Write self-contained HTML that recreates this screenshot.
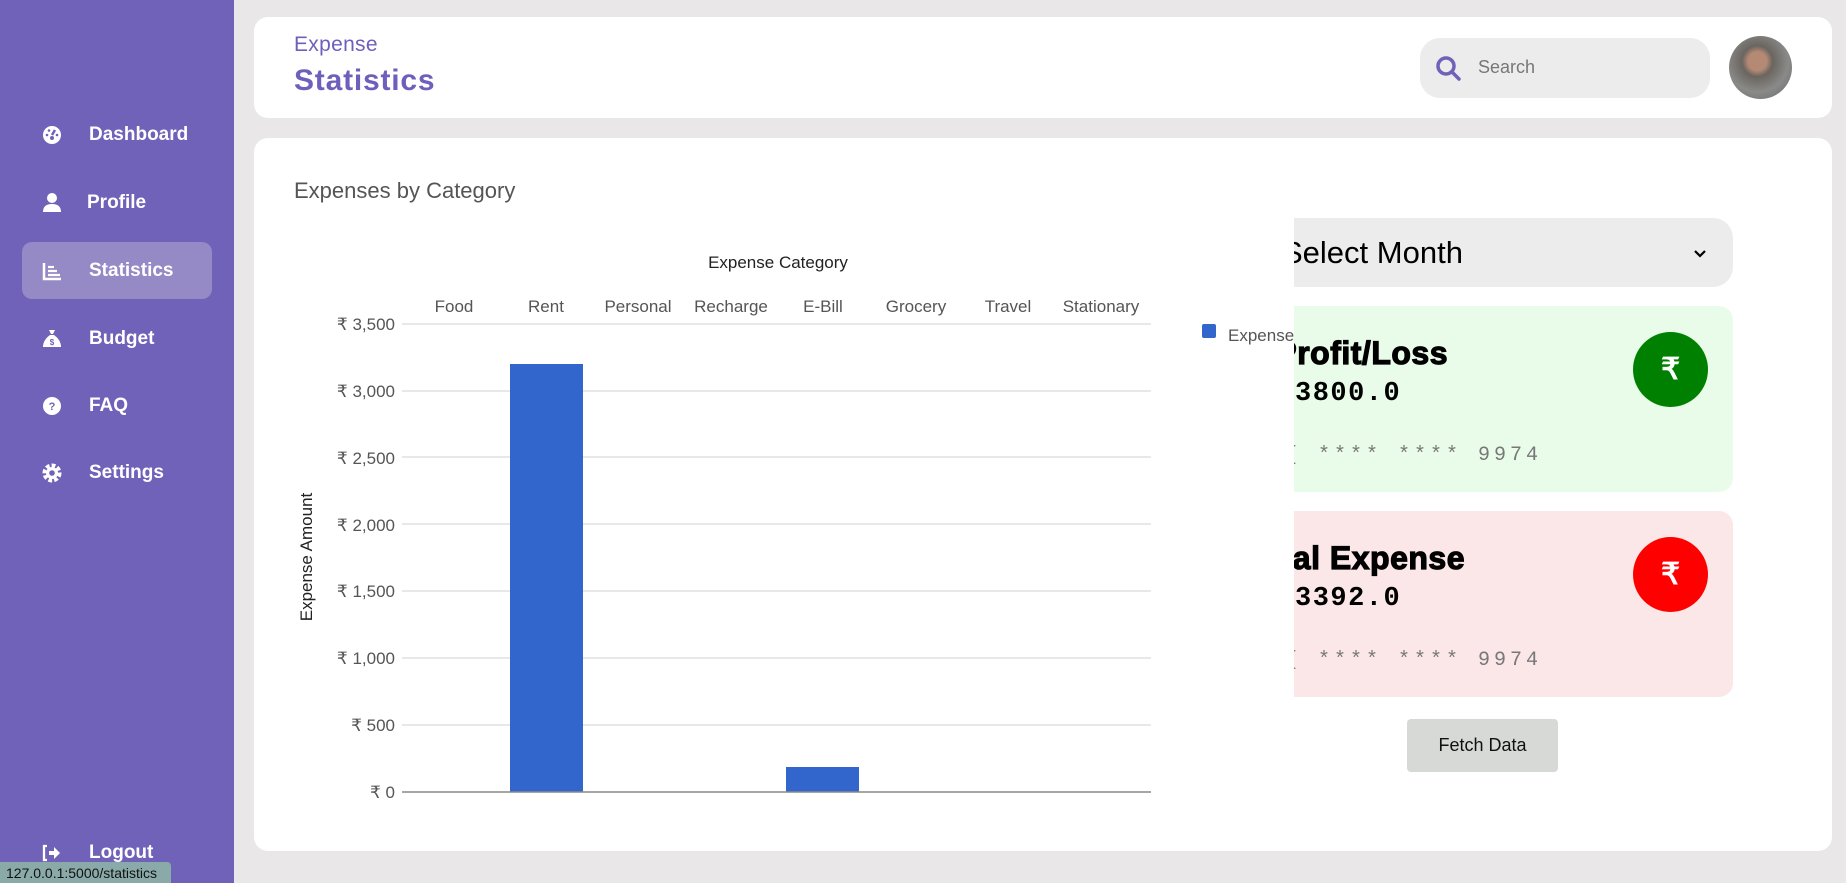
<!DOCTYPE html>
<html><head><meta charset="utf-8"><style>
*{margin:0;padding:0;box-sizing:border-box}
body{width:1846px;height:883px;overflow:hidden;background:#e9e7e8;font-family:"Liberation Sans",sans-serif;position:relative}
.side{position:absolute;left:0;top:0;width:234px;height:883px;background:#7062b8}
.item{position:absolute;left:0;width:234px;height:30px;color:#fff;font-weight:bold;font-size:19px}
.item .ic{position:absolute;left:41px;top:4px;width:22px;height:22px}
.item .tx{position:absolute;left:89px;top:4px}
.active{position:absolute;left:22px;top:242px;width:190px;height:57px;background:#9589c6;border-radius:10px}
.card{position:absolute;background:#fff;border-radius:14px}
.mono{font-family:"Liberation Mono",monospace}
.hd{position:absolute;top:29px;font-size:32px;font-weight:bold;text-align:right;width:400px;white-space:nowrap;letter-spacing:0.5px;color:#000;-webkit-text-stroke:1.2px #000}
</style></head><body>
<div class="side">
<div class="active"></div>
<div class="item" style="top:120px"><svg class="ic" viewBox="0 0 22 22"><circle cx="11" cy="11" r="9" fill="#fff"/><path d="M11 11 L14 6" stroke="#7062b8" stroke-width="2.5"/><circle cx="6" cy="11" r="1.3" fill="#7062b8"/><circle cx="8" cy="6.5" r="1.3" fill="#7062b8"/><circle cx="16" cy="11" r="1.3" fill="#7062b8"/><circle cx="11" cy="14" r="2" fill="#7062b8"/></svg><span class="tx">Dashboard</span></div>
<div class="item" style="top:188px"><svg class="ic" viewBox="0 0 22 22"><circle cx="11" cy="6" r="5" fill="#fff"/><path d="M2 20 Q2 12 11 12 Q20 12 20 20Z" fill="#fff"/></svg><span class="tx" style="left:87px">Profile</span></div>
<div class="item" style="top:256px"><svg class="ic" viewBox="0 0 22 22"><path d="M3 3V19H20" stroke="#fff" stroke-width="2.5" fill="none"/><path d="M7 7H13M7 11H16M7 15H19" stroke="#fff" stroke-width="2.3"/></svg><span class="tx">Statistics</span></div>
<div class="item" style="top:324px"><svg class="ic" viewBox="0 0 22 22"><path d="M8 2H14L12 6H10Z" fill="#fff"/><path d="M9 7H13Q20 12 20 19H2Q2 12 9 7Z" fill="#fff"/><text x="11" y="17" font-size="8" fill="#7062b8" text-anchor="middle" font-family="Liberation Sans">$</text></svg><span class="tx">Budget</span></div>
<div class="item" style="top:391px"><svg class="ic" viewBox="0 0 22 22"><circle cx="11" cy="11" r="9" fill="#fff"/><text x="11" y="15" font-size="11" font-weight="bold" fill="#7062b8" text-anchor="middle" font-family="Liberation Sans">?</text></svg><span class="tx">FAQ</span></div>
<div class="item" style="top:458px"><svg class="ic" viewBox="0 0 22 22"><circle cx="11" cy="11" r="7" fill="none" stroke="#fff" stroke-width="5" stroke-dasharray="3.5 1.9"/><circle cx="11" cy="11" r="6" fill="#fff"/><circle cx="11" cy="11" r="2.8" fill="#7062b8"/></svg><span class="tx">Settings</span></div>
<div class="item" style="top:838px"><svg class="ic" viewBox="0 0 22 22"><path d="M6 4H3V18H6" stroke="#fff" stroke-width="2.3" fill="none"/><path d="M8 9H13V5L19 11L13 17V13H8Z" fill="#fff"/></svg><span class="tx">Logout</span></div>
</div>
<div style="position:absolute;left:0;top:862px;width:171px;height:21px;background:#8aaaa9;border-top-right-radius:4px;font-size:14px;color:#111;padding:3px 0 0 6px">127.0.0.1:5000/statistics</div>

<div class="card" style="left:254px;top:17px;width:1578px;height:101px">
<div style="position:absolute;left:40px;top:16px;color:#6f5fbd;font-size:21px;letter-spacing:0.3px">Expense</div>
<div style="position:absolute;left:40px;top:47px;color:#6f5fbd;font-size:30px;font-weight:bold;letter-spacing:0.8px">Statistics</div>
<div style="position:absolute;left:1166px;top:21px;width:290px;height:60px;background:#ececec;border-radius:20px">
<svg style="position:absolute;left:15px;top:17px" width="28" height="28" viewBox="0 0 28 28"><circle cx="11" cy="11" r="8" fill="none" stroke="#7062b8" stroke-width="3.5"/><path d="M17 17L24 24" stroke="#7062b8" stroke-width="3.5" stroke-linecap="round"/></svg>
<div style="position:absolute;left:58px;top:19px;font-size:18px;color:#777">Search</div></div>
<div style="position:absolute;left:1475px;top:19px;width:63px;height:63px;border-radius:50%;background:radial-gradient(circle at 45% 40%,#b58a74 0 18%,#6a6560 30%,#8a8a88 60%,#5f6a6a 100%)"></div>
</div>

<div class="card" style="left:254px;top:138px;width:1578px;height:713px"></div>
<div style="position:absolute;left:294px;top:178px;font-size:22px;color:#555">Expenses by Category</div>
<svg style="position:absolute;left:0;top:0" width="1300" height="883" font-family="Liberation Sans" font-size="17" fill="#555">
<text x="778" y="268" text-anchor="middle" fill="#222" font-size="17">Expense Category</text>
<g text-anchor="middle"><text x="454" y="312">Food</text><text x="546" y="312">Rent</text><text x="638" y="312">Personal</text><text x="731" y="312">Recharge</text><text x="823" y="312">E-Bill</text><text x="916" y="312">Grocery</text><text x="1008" y="312">Travel</text><text x="1101" y="312">Stationary</text></g>
<g stroke="#e0e0e0" stroke-width="1.5"><path d="M402 324H1151M402 391H1151M402 457H1151M402 524H1151M402 591H1151M402 658H1151M402 725H1151"/></g>
<g text-anchor="end"><text x="395" y="330">₹ 3,500</text><text x="395" y="397">₹ 3,000</text><text x="395" y="464">₹ 2,500</text><text x="395" y="531">₹ 2,000</text><text x="395" y="597">₹ 1,500</text><text x="395" y="664">₹ 1,000</text><text x="395" y="731">₹ 500</text><text x="395" y="798">₹ 0</text></g>
<rect x="510" y="364" width="73" height="428" fill="#3366cc"/>
<rect x="786" y="767" width="73" height="25" fill="#3366cc"/>
<path d="M402 792H1151" stroke="#888" stroke-width="1.5"/>
<text transform="translate(312,557) rotate(-90)" text-anchor="middle" fill="#222">Expense Amount</text>
<rect x="1202" y="324" width="14" height="14" rx="2" fill="#3366cc"/>
<text x="1228" y="341">Expense</text>
</svg>
<div style="position:absolute;left:1294px;top:210px;width:440px;height:500px;overflow:hidden">
<div style="position:absolute;left:-30px;top:8px;width:469px;height:69px;background:#ececec;border-radius:20px"><div style="position:absolute;left:18px;top:17px;font-size:31px;color:#000">Select Month</div>
<svg style="position:absolute;left:429px;top:31px" width="14" height="10" viewBox="0 0 14 10"><path d="M2 2L7 7L12 2" stroke="#000" stroke-width="2.2" fill="none"/></svg></div>
<div style="position:absolute;left:-30px;top:96px;width:469px;height:186px;background:#e9fce9;border-radius:14px">
<div class="hd" style="left:-216px">Profit/Loss</div>
<div class="mono" style="position:absolute;left:31px;top:73px;font-size:27px;font-weight:bold;letter-spacing:1.5px">3800.0</div>
<div class="mono" style="position:absolute;left:22px;top:138px;font-size:20px;color:#777;letter-spacing:4px">[ **** **** 9974</div>
<div style="position:absolute;left:369px;top:26px;width:75px;height:75px;border-radius:50%;background:#008000;color:#fff;font-size:30px;font-weight:bold;text-align:center;line-height:75px">₹</div></div>
<div style="position:absolute;left:-30px;top:301px;width:469px;height:186px;background:#fbe7e7;border-radius:14px">
<div class="hd" style="left:-199px">Total Expense</div>
<div class="mono" style="position:absolute;left:31px;top:73px;font-size:27px;font-weight:bold;letter-spacing:1.5px">3392.0</div>
<div class="mono" style="position:absolute;left:22px;top:138px;font-size:20px;color:#777;letter-spacing:4px">[ **** **** 9974</div>
<div style="position:absolute;left:369px;top:26px;width:75px;height:75px;border-radius:50%;background:#ff0000;color:#fff;font-size:30px;font-weight:bold;text-align:center;line-height:75px">₹</div></div>
</div>
<div style="position:absolute;left:1407px;top:719px;width:151px;height:53px;background:#d7d9d7;border-radius:4px;font-size:18px;text-align:center;line-height:53px;color:#111">Fetch Data</div>
</body></html>
